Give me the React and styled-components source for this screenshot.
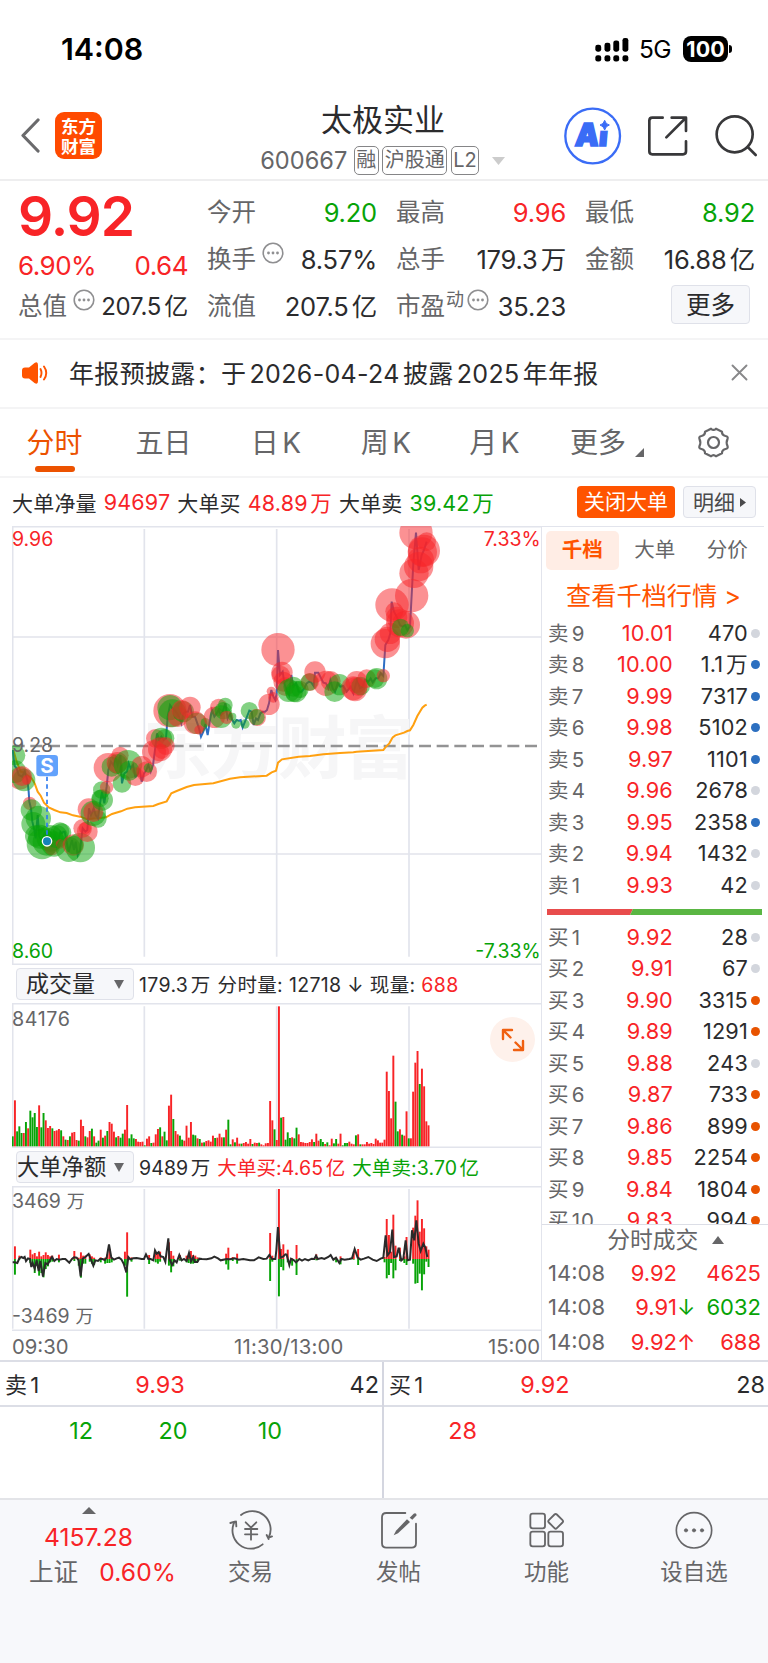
import React from "react";
import styled, { createGlobalStyle } from "styled-components";

const RED = "#f82427";
const GREEN = "#07a307";
const ORANGE = "#ff5400";
const INK = "#2b2b2d";
const GREY = "#666668";
const LINE = "#e2e4ec";

const GlobalStyle = createGlobalStyle`
  * { box-sizing: border-box; }
  body {
    margin: 0;
    background: #fff;
    color: ${INK};
    font-family: Inter, "Noto Sans CJK SC", sans-serif;
    text-autospace: normal;
    white-space: nowrap;
  }
`;

const tones = { red: RED, green: GREEN, grey: GREY, ink: INK };

const Screen = styled.div`
  width: 768px;
  height: 1663px;
  display: flex;
  flex-direction: column;
  overflow: hidden;
`;

const StatusBar = styled.div`
  height: 92px;
  display: flex;
  align-items: center;
  justify-content: space-between;
  padding: 6px 36px 0 61px;
`;

const Clock = styled.div`
  font-size: 30.4px;
  font-weight: 600;
  color: #000;
`;

const StatusRight = styled.div`
  display: flex;
  align-items: center;
  font-size: 25px;
  color: #000;
`;

const Network = styled.span`
  margin: 0 12px 0 10px;
  font-size: 24.5px;
  letter-spacing: -0.6px;
`;

const Battery = styled.div`
  width: 45px;
  height: 26px;
  border-radius: 8px;
  background: #000;
  color: #fff;
  font-size: 21.5px;
  font-weight: 700;
  line-height: 26px;
  text-align: center;
`;

const BatteryTip = styled.div`
  width: 3px;
  height: 8px;
  margin-left: 1px;
  border-radius: 0 4px 4px 0;
  background: #000;
`;

const Header = styled.header`
  height: 89px;
  display: grid;
  grid-template-columns: 248px 1fr 250px;
  border-bottom: 2px solid #eeeeef;
`;

const HeaderLeft = styled.div`
  display: flex;
  align-items: center;
  gap: 15px;
  padding-left: 20px;
`;

const Brand = styled.div`
  width: 47px;
  height: 47px;
  border-radius: 9px;
  background: #ff4a00;
  color: #fff;
  font-size: 17.5px;
  font-weight: 600;
  line-height: 19.5px;
  padding-top: 5px;
  text-align: center;
`;

const HeaderTitle = styled.div`
  display: flex;
  flex-direction: column;
  align-items: center;
`;

const StockName = styled.div`
  margin-top: 8.5px;
  font-size: 31px;
  line-height: 38px;
`;

const StockMeta = styled.div`
  display: flex;
  align-items: center;
  gap: 3.5px;
  margin-top: 7.5px;
  color: ${GREY};
`;

const Code = styled.span`
  margin: 0 3px 0 -1px;
  font-size: 23.6px;
`;

const Tag = styled.span`
  height: 29px;
  padding: 0 1.5px;
  border: 1.5px solid #858587;
  border-radius: 5px;
  font-size: 20px;
  line-height: 26px;
`;

const HeaderRight = styled.div`
  display: flex;
  align-items: center;
  justify-content: flex-end;
`;

const Summary = styled.section`
  height: 159px;
  display: flex;
  gap: 20px;
  padding: 8px 13px 0 18px;
  border-bottom: 2px solid #f4f4f5;
`;

const PriceColumn = styled.div`
  width: 170px;
  flex: none;
`;

const BigPrice = styled.div`
  height: 54px;
  font-size: 55px;
  font-weight: 600;
  line-height: 54px;
  letter-spacing: -1px;
  color: ${RED};
`;

const Change = styled.div`
  height: 36px;
  display: flex;
  align-items: center;
  justify-content: space-between;
  margin-top: 4px;
  font-size: 26px;
  letter-spacing: -0.5px;
  color: ${RED};
`;

const StatGrid = styled.div`
  flex: 1;
  display: grid;
  grid-template-columns: repeat(3, 170px);
  grid-template-rows: repeat(3, 47px);
  column-gap: 19px;
  margin-left: -1px;
`;

const Stat = styled.div`
  height: 47px;
  display: flex;
  align-items: center;
  font-size: 24.5px;
  line-height: 47px;
  color: ${GREY};
`;

const StatValue = styled.span`
  margin-left: auto;
  font-size: ${(p) => (p.$compact ? 24 : 25.5)}px;
  letter-spacing: -0.2px;
  color: ${(p) => tones[p.$tone || "ink"]};
`;

const Hint = styled.sup`
  font-size: 18px;
  line-height: 1;
  margin: 0 -3px 14px 1px;
`;

const InfoIcon = styled.svg`
  flex: none;
  width: 22px;
  height: 22px;
  margin: -13px 0 0 6px;
`;

const MoreButton = styled.button`
  width: 79px;
  height: 39px;
  margin: 2px 5px 0 auto;
  padding: 0;
  border: 1.5px solid #dfe1e9;
  border-radius: 4px;
  background: #f6f7fa;
  color: ${INK};
  font: inherit;
  font-size: 24.5px;
  line-height: 34px;
`;

const Notice = styled.section`
  height: 69px;
  display: flex;
  align-items: center;
  padding: 0 20px 2px 22px;
  border-bottom: 2px solid #f4f4f5;
  font-size: 25px;
`;

const NoticeText = styled.span`
  flex: 1;
  margin: -2px 0 0 21px;
  letter-spacing: 0.34px;
`;

const Tabs = styled.nav`
  height: 69px;
  display: grid;
  grid-template-columns: 109px 109px 116px 104px 113px 1fr 96px;
  border-bottom: 2px solid #f4f4f5;
`;

const Tab = styled.div`
  display: flex;
  flex-direction: column;
  align-items: center;
  font-size: 28px;
  line-height: 68px;
  color: ${(p) => (p.$active ? "#ec5200" : GREY)};

  &::after {
    content: "";
    display: ${(p) => (p.$active ? "block" : "none")};
    width: 40px;
    height: 6px;
    margin-top: -11px;
    border-radius: 3px;
    background: #ec5200;
  }
`;

const MoreTab = styled.div`
  display: flex;
  align-items: center;
  gap: 9px;
  padding-left: 19px;
  font-size: 28px;
  line-height: 68px;
  color: ${GREY};

  svg { margin-top: 19px; }
`;

const GearCell = styled.div`
  display: flex;
  align-items: center;
  justify-content: center;
  padding: 0 14px 2px 0;
`;

const OrderBar = styled.section`
  height: 48px;
  display: flex;
  align-items: center;
  gap: 7px;
  padding: 0 12px 1px 12px;
  font-size: 21px;
  letter-spacing: 0.2px;
`;

const Figure = styled.span`
  color: ${(p) => tones[p.$tone || "ink"]};
`;

const OrderFigure = styled(Figure)`
  font-size: 21.5px;
  letter-spacing: 0.15px;
`;

const CloseOrders = styled.button`
  width: 98px;
  height: 32px;
  margin: 1px 0 0 auto;
  padding: 0;
  border: 0;
  border-radius: 4px;
  background: ${ORANGE};
  color: #fff;
  font: inherit;
  font-size: 21px;
  line-height: 30px;
`;

const DetailButton = styled.button`
  width: 73px;
  height: 32px;
  display: flex;
  align-items: center;
  justify-content: center;
  gap: 5px;
  margin: 1px 0 0 1px;
  padding: 0;
  border: 1.5px solid #dfe1e9;
  border-radius: 4px;
  background: #f6f7fa;
  color: #4a4a4c;
  font: inherit;
  font-size: 21px;
  line-height: 29px;
`;

const Market = styled.main`
  height: 834px;
  display: flex;
`;

const Charts = styled.div`
  width: 542px;
  flex: none;
  padding-left: 12px;
  border-right: 1.5px solid ${LINE};
`;

const Plot = styled.svg`
  display: block;
  width: 530px;
  height: ${(p) => p.$height}px;
`;

const Indicator = styled.div`
  height: 38px;
  display: flex;
  align-items: center;
  gap: 7px;
  padding: 0 0 1px 4px;
  font-size: 19.5px;
  letter-spacing: ${(p) => p.$spacing || 0.1}px;
`;

const Select = styled.div`
  width: 118px;
  height: 32px;
  display: flex;
  align-items: center;
  justify-content: space-between;
  padding: 0 9px 0 ${(p) => p.$inset}px;
  margin: 1px -2px 0 0;
  border: 1.5px solid #dfe1e9;
  border-radius: 4px;
  background: #f6f7fa;
  font-size: ${(p) => (p.$inset ? 23 : 22.3)}px;
  line-height: 28px;
  letter-spacing: 0;
`;

const VolumeWrap = styled.div`
  position: relative;
  height: 145px;
`;

const Expand = styled.div`
  position: absolute;
  top: 14px;
  right: 6px;
  width: 45px;
  height: 45px;
  border-radius: 50%;
  background: #fef1eb;
  display: flex;
  align-items: center;
  justify-content: center;
`;

const TimeAxis = styled.div`
  height: 29px;
  display: flex;
  align-items: center;
  justify-content: space-between;
  padding: 2px 1px 0 0;
  font-size: 20.3px;
  color: ${GREY};
`;

const MidTime = styled.span`
  margin-left: 21px;
  letter-spacing: 0.2px;
`;

const Depth = styled.aside`
  flex: 1;
  display: flex;
  flex-direction: column;
`;

const DepthTabs = styled.div`
  height: 48px;
  display: flex;
  align-items: center;
  padding-left: 4px;
  border-top: 1.5px solid ${LINE};
  margin-right: 13px;
`;

const DepthTab = styled.div`
  width: 72.5px;
  height: 39px;
  flex: none;
  border-radius: 5px;
  background: ${(p) => (p.$active ? "#ffede5" : "none")};
  color: ${(p) => (p.$active ? ORANGE : GREY)};
  font-size: 20.5px;
  font-weight: ${(p) => (p.$active ? 700 : 400)};
  line-height: 38px;
  text-align: center;
`;

const DepthLink = styled.div`
  height: 43.5px;
  padding-left: 24px;
  font-size: 25.2px;
  line-height: 44px;
  color: ${ORANGE};
`;

const Levels = styled.div`
  height: ${(p) => p.$height}px;
  overflow: hidden;
`;

const LevelRow = styled.div`
  height: 31.5px;
  display: grid;
  grid-template-columns: 46px 79px 75px 8px;
  align-items: center;
  padding-left: 6px;
  font-size: 21.7px;
  line-height: 31.5px;
`;

const LevelName = styled.span`
  font-size: 20.5px;
  color: ${GREY};
  letter-spacing: 0.8px;
`;

const LevelPrice = styled.span`
  color: ${RED};
  text-align: right;
  letter-spacing: 0.2px;
`;

const LevelSize = styled.span`
  text-align: right;
  letter-spacing: 0.2px;
`;

const Dot = styled.i`
  width: 9px;
  height: 9px;
  margin-left: 3px;
  border-radius: 50%;
  background: ${(p) => p.$color};
`;

const Ratio = styled.svg`
  display: block;
  flex: none;
  width: 215px;
  height: 6px;
  margin: 8px 0 6.5px 5px;
`;

const TradesTitle = styled.div`
  height: 32px;
  display: flex;
  align-items: center;
  justify-content: center;
  gap: 14px;
  padding-right: 13px;
  margin-right: -26px;
  border-top: 1.5px solid #dcdee6;
  font-size: 22.8px;
  line-height: 30px;
  color: ${GREY};
`;

const TradeRow = styled.div`
  height: 34.5px;
  display: grid;
  grid-template-columns: 73px 56px 16px 68px;
  align-items: center;
  padding-left: 6px;
  font-size: 22px;
  color: ${GREY};
`;

const TradeCell = styled.span`
  text-align: right;
  color: ${(p) => tones[p.$tone]};
`;

const Quotes = styled.section`
  height: 138px;
  display: grid;
  grid-template-columns: 384px 384px;
  border-top: 2px solid #dcdee6;
`;

const QuoteSide = styled.div`
  border-right: ${(p) => (p.$divided ? "2px solid #d4d6e0" : "none")};
  font-size: 23.4px;
`;

const QuoteRow = styled.div`
  height: 45px;
  display: grid;
  grid-template-columns: 83px 1fr 145px;
  align-items: center;
  padding: 1px 5px 0;
  border-bottom: 2px solid #dcdee6;
`;

const QuoteName = styled.span`
  margin-top: -2px;
  font-size: 22px;
  letter-spacing: 0.4px;
`;

const QuotePrice = styled.span`
  text-align: center;
  color: ${RED};
`;

const QuoteSize = styled.span`
  text-align: right;
  margin-right: -2px;
`;

const Queue = styled.div`
  display: grid;
  grid-template-columns: 93px repeat(3, 94.5px);
  padding-top: 9px;
  text-align: right;
  color: ${(p) => tones[p.$tone]};
`;

const BottomBar = styled.footer`
  flex: 1;
  display: grid;
  grid-template-columns: 177px 147px 149px 147px 1fr;
  border-top: 2px solid #e3e4e8;
  background: #f7f8fb;
`;

const IndexBox = styled.div`
  display: flex;
  flex-direction: column;
  align-items: center;
  padding-top: 7px;
  font-size: 24.6px;
  color: ${RED};
`;

const IndexValue = styled.div`
  margin-top: 5px;
  line-height: 36px;
  letter-spacing: 0.1px;
`;

const IndexLine = styled.div`
  display: flex;
  gap: 21px;
  padding-left: 28px;
  line-height: 34px;
  letter-spacing: 0.1px;
`;

const NavItem = styled.div`
  display: flex;
  flex-direction: column;
  align-items: center;
  padding-top: 10px;
  font-size: 22.5px;
  line-height: 36px;
  color: ${GREY};

  svg { margin-bottom: 4px; }
`;

const Icon = ({ w, h, box, color = GREY, width = 4, children }) => (
  <svg
    width={w}
    height={h}
    viewBox={box}
    fill="none"
    stroke={color}
    strokeWidth={width}
    strokeLinecap="round"
    strokeLinejoin="round"
  >
    {children}
  </svg>
);

const Info = () => (
  <InfoIcon viewBox="0 0 22 22">
    <circle cx="11" cy="11" r="9.8" fill="none" stroke="#8f8f91" strokeWidth="1.6" />
    <g fill="#8f8f91">
      <circle cx="6.5" cy="11" r="1.4" />
      <circle cx="11" cy="11" r="1.4" />
      <circle cx="15.5" cy="11" r="1.4" />
    </g>
  </InfoIcon>
);

const Caret = ({ up, w = 13, h = 8, color = GREY }) => (
  <svg width={w} height={h} viewBox="0 0 12 8" preserveAspectRatio="none">
    <path d={up ? "M0 8 6 0 12 8Z" : "M0 0H12L6 8Z"} fill={color} />
  </svg>
);

// Chart space: 6.6 units per minute, three units per css pixel.
const minuteX = (i) => 38.2 + i * 6.6;

const volumes = `g30 r138 g45 g60 g40 r40 g73 r54 g107 g87 g100 g58 r123 g57 g100 r78 r55 r61 g54 r46
r48 r52 g48 r30 g20 r19 g30 r41 r43 r19 g17 r80 r61 g30 r27 r46 g53 r30 g11 g17
r50 g26 r32 g46 r73 r68 r44 g27 r31 g26 g38 r50 r124 g24 g36 g24 r22 r14 r13 r14
g3 r23 r30 g10 r11 r36 r52 g57 r30 g44 g18 r122 r155 g82 r46 r36 g32 g20 r17 r62
r26 r73 g35 g33 r24 g22 r11 g12 r16 r18 r14 r32 g25 r26 r38 r27 g27 r50 g80 g6
r21 g12 r26 r8 g8 r10 r13 r8 r22 g7 r11 r10 g11 r6 r3 r9 r10 r136 r78 g51
r19 r420 g86 r88 g20 g42 g25 r27 g24 g56 r36 r13 r12 r10 r10 r13 r21 g13 r38 r17
g22 g13 r7 g12 r3 r23 g9 g22 r8 r38 g3 g10 g10 r14 r8 r6 g33 r36 g6 r6
r6 r13 r8 r10 r7 r23 r18 r11 r11 r20 r224 r166 r84 r272 g134 g45 r51 g35 r32 r105
g24 r24 r164 r251 r286 g187 r233 r180 r75 r63`
  .split(/\s+/)
  .map((v) => ({ color: v[0] === "r" ? RED : GREEN, h: Number(v.slice(1)) }));

// [minute, buy, sell]
const flows = [
  [1, 38, 47], [3, 10, 3], [8, 28, 12], [9, 14, 20], [10, 18, 42], [11, 8, 20], [12, 22, 50], [13, 8, 42],
  [14, 12, 55], [15, 20, 30], [16, 12, 22], [17, 8, 10], [18, 10, 8], [21, 13, 10], [28, 24, 6], [30, 4, 20],
  [31, 20, 56], [32, 10, 14], [33, 10, 14], [35, 14, 8], [36, 8, 14], [37, 4, 18], [40, 5, 10], [42, 4, 14],
  [43, 14, 12], [44, 30, 12], [45, 4, 10], [51, 22, 20], [52, 80, 113], [54, 5, 8], [62, 12, 15], [65, 20, 10],
  [66, 20, 14], [67, 22, 8], [71, 50, 20], [72, 24, 40], [73, 10, 22], [76, 12, 5], [79, 10, 10], [80, 12, 12],
  [81, 24, 14], [82, 12, 14], [83, 10, 12], [84, 5, 8], [97, 16, 16], [98, 34, 32], [100, 6, 6], [102, 16, 14],
  [117, 78, 66], [118, 10, 8], [121, 210, 112], [122, 30, 24], [123, 44, 34], [125, 28, 10], [127, 2, 20],
  [129, 42, 48], [138, 14, 4], [147, 2, 10], [149, 8, 16], [155, 22, 2], [157, 30, 18], [169, 6, 10],
  [170, 120, 58], [171, 72, 48], [172, 22, 12], [173, 133, 58], [174, 40, 34], [176, 34, 6], [178, 8, 12],
  [179, 66, 18], [182, 94, 14], [183, 130, 74], [184, 176, 72], [185, 82, 44], [186, 120, 94], [187, 92, 46],
  [188, 38, 8], [189, 28, 24],
];

const pricePath =
  "38 690 44 738 50 745 56 765 66 770 74 755 82 780 86 815 88 845 93 865 97 905 103 930 107 955 113 885 118 950 126 960 134 940 141 965 150 955 156 975 165 945 175 965 181 935 186 940 190 935 194 935 200 965 206 995 216 960 222 990 227 965 233 1005 240 990 248 925 256 935 262 930 267 865 273 885 281 865 287 885 294 895 300 850 306 815 313 850 320 800 325 750 333 725 340 735 347 715 353 735 361 705 366 790 373 760 381 755 386 730 392 745 399 735 406 770 412 765 419 750 425 785 432 760 439 750 445 735 452 755 459 735 465 690 471 640 478 660 484 650 491 660 498 655 503 590 510 555 517 565 524 570 531 580 537 590 544 610 550 580 557 575 564 575 570 555 577 590 585 590 592 610 597 625 603 650 610 635 616 612 623 645 630 600 636 570 643 590 650 580 656 570 663 585 670 570 676 550 683 595 690 580 697 600 703 610 710 600 716 602 722 600 728 622 735 605 741 590 748 572 755 575 761 615 768 595 774 600 781 580 788 575 795 575 801 570 807 550 814 510 820 530 826 540 830 520 834 390 840 465 848 455 853 490 860 510 867 525 874 465 880 500 888 490 896 515 905 515 913 505 920 490 927 485 934 488 941 498 945 458 955 458 962 472 970 488 978 490 985 505 991 480 998 505 1005 515 1013 490 1021 500 1030 498 1040 515 1052 500 1060 520 1071 480 1080 505 1088 500 1095 480 1105 485 1112 475 1118 487 1127 475 1135 475 1142 460 1150 468 1156 375 1165 360 1171 340 1175 245 1182 275 1190 290 1200 315 1208 320 1215 315 1222 330 1230 320 1240 130 1248 38 1256 150 1265 105 1272 90 1280 65";

const averagePath =
  "40 690 50 725 62 755 72 757 82 765 95 775 104 790 113 815 122 827 132 848 146 862 163 870 181 877 200 879 219 886 240 890 260 897 294 895 318 892 336 882 363 874 382 866 405 862 460 858 475 852 500 844 514 820 530 813 560 801 582 795 640 790 690 776 720 772 800 767 815 757 828 752 834 728 846 718 896 710 930 708 970 703 1020 699 1060 697 1070 695 1150 690 1156 682 1168 670 1178 652 1186 646 1212 638 1222 633 1230 631 1240 615 1252 588 1267 563 1274 557 1280 554";

const bubbles = `g46,706,30 r60,775,34 g45,755,34 g72,780,34 r66,768,30 r80,780,14 r89,850,20 g94,870,32 g100,912,36
g115,895,38 g107,948,32 g120,950,36 g126,972,46 g140,965,42 g150,955,40 r156,982,24 g162,972,38 g180,935,28
g186,938,28 g170,950,34 r181,972,14 g206,988,38 r220,975,32 g222,975,28 g241,983,44 r248,925,28 r262,935,31
r255,925,18 r266,868,33 g280,880,38 g294,897,26 r280,876,30 g307,840,32 g305,810,26 r320,802,20 g300,835,26
r325,743,44 r360,706,26 g335,740,30 g352,732,30 r352,728,32 g384,733,43 g366,790,28 r406,770,28 r425,740,32
g388,752,30 r440,755,31 g445,744,14 r466,655,28 g484,655,32 g495,655,28 r462,696,36 r480,688,36 r497,678,27
r485,695,22 r510,572,50 g510,563,38 g517,580,42 r534,590,31 g550,575,32 r570,562,32 r545,570,30 g590,610,32
r585,608,34 r597,630,14 g616,608,14 r643,592,32 r656,562,26 g663,590,34 g676,555,22 g670,572,26 r680,592,20
g697,590,12 g708,612,14 g735,612,14 g748,572,26 r772,592,26 g770,592,24 r807,553,32 r814,514,14 r820,532,16
r834,389,50 r846,457,32 r842,465,28 r850,485,30 r856,500,28 g866,512,34 g880,500,30 g888,515,32 g882,520,26
g900,508,26 r930,486,27 g928,486,26 r945,456,32 r978,490,38 r992,483,30 g1004,515,31 g1018,494,32 r1060,505,36
r1070,486,33 r1065,508,36 g1082,498,28 r1075,500,28 r1100,476,28 g1125,476,28 g1130,476,32 r1150,467,20
r1156,371,44 r1162,358,38 r1171,340,32 r1176,255,50 r1183,274,27 r1190,292,32 r1200,310,42 r1218,314,42
g1202,322,26 g1222,332,20 r1235,227,50 r1242,160,44 r1256,140,44 r1262,120,40 r1248,38,50 r1272,92,48
r1267,96,44 r1280,65,28`
  .split(/\s+/)
  .map((b) => {
    const [x, y, r] = b.slice(1).split(",");
    return { color: b[0] === "r" ? RED : GREEN, x, y, r };
  });

const netPath =
  "38 936 44 936 52 938 58 924 64 920 70 923 74 920 78 932 84 924 90 926 94 950 98 938 104 955 110 930 116 962 121 932 129 979 136 938 143 942 150 930 156 920 163 932 170 926 178 928 188 926 196 926 208 937 216 926 222 921 230 922 236 930 242 978 248 925 256 920 266 911 272 926 280 946 286 930 294 932 300 926 308 926 314 929 320 922 327 882 334 922 342 928 350 924 357 922 364 927 371 940 379 966 385 920 391 927 400 924 410 923 425 926 432 926 438 912 445 926 452 926 460 930 465 900 470 910 476 905 482 918 490 920 496 934 505 864 508 925 516 944 524 930 530 936 538 914 545 930 552 926 560 932 567 908 573 933 580 920 584 935 592 935 598 925 606 926 620 927 634 924 643 919 654 924 662 930 680 926 690 927 704 924 716 928 730 926 750 930 762 930 776 921 790 926 800 925 808 914 816 926 826 926 829 900 834 830 841 922 850 918 856 912 860 913 868 944 873 925 882 930 888 936 898 926 906 931 915 926 925 930 935 925 943 926 948 916 953 926 965 923 973 926 985 920 992 914 1000 928 1008 922 1018 938 1024 926 1034 928 1048 926 1056 924 1064 896 1073 922 1082 928 1092 925 1105 920 1118 928 1130 932 1142 925 1150 922 1157 855 1162 915 1170 905 1177 838 1182 920 1190 918 1196 892 1204 930 1210 925 1217 870 1223 930 1230 928 1236 840 1243 870 1249 810 1256 880 1262 902 1270 880 1276 892 1282 920";

const asks = [
  ["卖9", "10.01", "470", 0], ["卖8", "10.00", "1.1万", 1], ["卖7", "9.99", "7317", 1],
  ["卖6", "9.98", "5102", 1], ["卖5", "9.97", "1101", 1], ["卖4", "9.96", "2678", 0],
  ["卖3", "9.95", "2358", 1], ["卖2", "9.94", "1432", 0], ["卖1", "9.93", "42", 0],
];

const bids = [
  ["买1", "9.92", "28", 0], ["买2", "9.91", "67", 0], ["买3", "9.90", "3315", 1],
  ["买4", "9.89", "1291", 1], ["买5", "9.88", "243", 0], ["买6", "9.87", "733", 1],
  ["买7", "9.86", "899", 1], ["买8", "9.85", "2254", 1], ["买9", "9.84", "1804", 1],
  ["买10", "9.83", "994", 1],
];

const Level = ({ row, accent }) => (
  <LevelRow>
    <LevelName>{row[0]}</LevelName>
    <LevelPrice>{row[1]}</LevelPrice>
    <LevelSize>{row[2]}</LevelSize>
    <Dot $color={row[3] ? accent : "#d3d6dd"} />
  </LevelRow>
);

const PriceChart = () => (
  <Plot $height={439} viewBox="36 18 1590 1317" fontSize="58.5">
    <g stroke={LINE} strokeWidth="5">
      <path d="M36 20H1626M36 351H1626M36 1002H1626M36 1333H1626" />
      <path d="M38 18V1335M433 27V1310M830 27V1310M1227 27V1310" />
    </g>
    <text x="430" y="758" fontSize="206" fontWeight="700" fill="#f6f6f7" textLength="812">
      东方财富
    </text>
    <path d="M38 678H1620" stroke="#939394" strokeWidth="7" strokeDasharray="36 17" />
    <polyline points={averagePath} fill="none" stroke="#ffa010" strokeWidth="6" />
    <polyline points={pricePath} fill="none" stroke="#2d6fc4" strokeWidth="6" />
    {bubbles.map((b, i) => (
      <circle key={i} cx={b.x} cy={b.y} r={b.r} fill={b.color} opacity="0.5" />
    ))}
    <path d="M141 770V950" stroke="#2d7bf0" strokeWidth="5" strokeDasharray="13 10" />
    <rect x="109" y="705" width="65" height="64" rx="10" fill="#62a2fc" />
    <text x="141" y="759" fontSize="62" fontWeight="700" fill="#fff" textAnchor="middle">
      S
    </text>
    <circle cx="141" cy="964" r="14" fill="#1583b9" stroke="#fff" strokeWidth="4" />
    <text x="36" y="77" fill={RED}>9.96</text>
    <text x="1622" y="77" fill={RED} textAnchor="end">7.33%</text>
    <text x="36" y="695" fill={GREY}>9.28</text>
    <text x="36" y="1313" fill={GREEN}>8.60</text>
    <text x="1622" y="1313" fill={GREEN} textAnchor="end">-7.33%</text>
  </Plot>
);

const VolumeChart = () => (
  <Plot $height={145} viewBox="36 158 1590 435" fontSize="59">
    <g stroke={LINE} strokeWidth="5">
      <path d="M36 160H1626M36 591H1626M38 158V593M433 168V588M830 168V588M1227 168V588" />
    </g>
    {volumes.map((v, i) => (
      <rect key={i} x={minuteX(i) - 2.9} y={588 - v.h} width="5.8" height={v.h} fill={v.color} />
    ))}
    <text x="36" y="226" fill={GREY} textLength="174">84176</text>
  </Plot>
);

const NetChart = () => (
  <Plot $height={145} viewBox="36 707 1590 435" fontSize="58.5">
    <g stroke={LINE} strokeWidth="5">
      <path d="M36 709H1626M36 1140H1626M38 707V1135M433 716V1135M830 716V1135M1227 716V1135" />
    </g>
    {flows.map(([i, buy, sell]) => (
      <g key={i}>
        <rect x={minuteX(i) - 2.9} y={926 - buy} width="5.8" height={buy} fill={RED} />
        <rect x={minuteX(i) - 2.9} y="926" width="5.8" height={sell} fill={GREEN} />
      </g>
    ))}
    <polyline points={netPath} fill="none" stroke="#2a2a2a" strokeWidth="6" />
    <text x="36" y="774" fill={GREY}>3469<tspan dx="-4" fontSize="54">万</tspan></text>
    <text x="36" y="1117" fill={GREY}>-3469<tspan dx="-4" fontSize="54">万</tspan></text>
  </Plot>
);

const App = () => (
  <Screen>
    <GlobalStyle />
    <StatusBar>
      <Clock>14:08</Clock>
      <StatusRight>
        <svg width="34" height="25" viewBox="119 19 104 75">
          {[[120, 42, 21], [148, 36, 27], [175, 29, 34], [203, 21, 42]].map(([x, y, h]) => (
            <g key={x}>
              <rect x={x} y={y} width="18" height={h} rx="7" />
              <rect x={x} y="74" width="18" height="19" rx="7" />
            </g>
          ))}
        </svg>
        <Network>5G</Network>
        <Battery>100</Battery>
        <BatteryTip />
      </StatusRight>
    </StatusBar>

    <Header>
      <HeaderLeft>
        <Icon w={20} h={35} box="0 0 20 35" color="#6a6a6c" width={3.2}>
          <path d="M18 2 3 17.5 18 33" />
        </Icon>
        <Brand>东方<br />财富</Brand>
      </HeaderLeft>
      <HeaderTitle>
        <StockName>太极实业</StockName>
        <StockMeta>
          <Code>600667</Code>
          <Tag>融</Tag>
          <Tag>沪股通</Tag>
          <Tag>L2</Tag>
          <svg width="22" height="8" viewBox="0 0 22 8">
            <path d="M9 0H22L15.5 8Z" fill="#ccc" />
          </svg>
        </StockMeta>
      </HeaderTitle>
      <HeaderRight>
        <svg width="204" height="60" viewBox="27 228 612 180" fill="none">
          <circle cx="113" cy="318" r="82" stroke="#3a6cf6" strokeWidth="7" />
          <text
            x="60"
            y="348"
            fontSize="94"
            fontWeight="900"
            fill="#3a6cf6"
            stroke="#3a6cf6"
            strokeWidth="5"
            textLength="98"
            lengthAdjust="spacingAndGlyphs"
            transform="skewX(-5) translate(29 0)"
          >
            Ai
          </text>
          <path d="M130 264H172V302H130Z" fill="#fff" />
          <path
            d="M149 271Q152 283 163 285Q152 288 149 300Q146 288 135 285Q146 283 149 271Z"
            fill="#3a6cf6"
            stroke="#3a6cf6"
            strokeWidth="3"
          />
          <g stroke="#38383a" strokeWidth="8" strokeLinecap="round" strokeLinejoin="round">
            <path d="M323 263H292Q283 263 283 272V364Q283 373 292 373H384Q393 373 393 364V334" />
            <path d="M350 263H393V303M392 264 334 322" />
            <circle cx="539" cy="313" r="54" />
            <path d="M578 351 602 375" />
          </g>
        </svg>
      </HeaderRight>
    </Header>

    <Summary>
      <PriceColumn>
        <BigPrice>9.92</BigPrice>
        <Change><span>6.90%</span><span>0.64</span></Change>
        <Stat>总值<Info /><StatValue $compact>207.5亿</StatValue></Stat>
      </PriceColumn>
      <StatGrid>
        <Stat>今开<StatValue $tone="green">9.20</StatValue></Stat>
        <Stat>最高<StatValue $tone="red">9.96</StatValue></Stat>
        <Stat>最低<StatValue $tone="green">8.92</StatValue></Stat>
        <Stat>换手<Info /><StatValue>8.57%</StatValue></Stat>
        <Stat>总手<StatValue>179.3万</StatValue></Stat>
        <Stat>金额<StatValue>16.88亿</StatValue></Stat>
        <Stat>流值<StatValue>207.5亿</StatValue></Stat>
        <Stat>市盈<Hint>动</Hint><Info /><StatValue>35.23</StatValue></Stat>
        <MoreButton>更多</MoreButton>
      </StatGrid>
    </Summary>

    <Notice>
      <svg width="26" height="22" viewBox="0 0 26 22">
        <path d="M3 5.500H7L12.500 1Q16 -1 16 3V19Q16 23 12.500 21L7 16.500H3Q0 16.500 0 13.500V8.500Q0 5.500 3 5.500Z" fill={ORANGE} />
        <path d="M18.500 7Q20.500 11 18.500 15M22 4.500Q26.500 11 22 17.500" fill="none" stroke={ORANGE} strokeWidth="1.9" strokeLinecap="round" />
      </svg>
      <NoticeText>年报预披露：于2026-04-24披露2025年年报</NoticeText>
      <Icon w={17} h={17} box="0 0 17 17" color="#88888a" width={1.9}>
        <path d="M1.500 1.500 15.500 15.500M15.500 1.500 1.500 15.500" />
      </Icon>
    </Notice>

    <Tabs>
      <Tab $active>分时</Tab>
      <Tab>五日</Tab>
      <Tab>日K</Tab>
      <Tab>周K</Tab>
      <Tab>月K</Tab>
      <MoreTab>
        更多
        <svg width="9" height="9" viewBox="0 0 9 9"><path d="M9 0V9H0Z" fill={GREY} /></svg>
      </MoreTab>
      <GearCell>
        <Icon w={33} h={33} box="0 0 33 33" width={2.2}>
          <path d="M11.500 4 14 2.700Q16.500 5.200 19 2.700L25 5.700Q24.800 9 28.500 10Q31.500 10.500 30.500 13Q28.800 16.500 30.500 20Q31.500 22.500 28.500 23Q24.800 24 25 27.300L19 30.300Q16.500 27.800 14 30.300L8 27.300Q8.200 24 4.500 23Q1.500 22.500 2.500 20Q4.200 16.500 2.500 13Q1.500 10.500 4.500 10Q8.200 9 8 5.700Z" />
          <circle cx="16.500" cy="16.500" r="5.500" />
        </Icon>
      </GearCell>
    </Tabs>

    <OrderBar>
      <span>大单净量</span>
      <OrderFigure $tone="red">94697</OrderFigure>
      <span>大单买</span>
      <OrderFigure $tone="red">48.89万</OrderFigure>
      <span>大单卖</span>
      <OrderFigure $tone="green">39.42万</OrderFigure>
      <CloseOrders>关闭大单</CloseOrders>
      <DetailButton>
        明细
        <svg width="6" height="9" viewBox="0 0 6 9"><path d="M0 0 6 4.500 0 9Z" fill="#4a4a4c" /></svg>
      </DetailButton>
    </OrderBar>

    <Market>
      <Charts>
        <PriceChart />
        <Indicator $spacing={0.35}>
          <Select $inset={9}>成交量<Caret w={10} h={9} /></Select>
          <span>179.3万</span>
          <span>分时量: 12718 ↓ 现量: <Figure $tone="red">688</Figure></span>
        </Indicator>
        <VolumeWrap>
          <VolumeChart />
          <Expand>
            <Icon w={24} h={24} box="0 0 24 24" color="#f06010" width={2.4}>
              <path d="M2 11V2H11M2.500 2.500 9.500 9.500M22 13V22H13M21.500 21.500 14.500 14.500" />
            </Icon>
          </Expand>
        </VolumeWrap>
        <Indicator>
          <Select $inset={0}>大单净额<Caret w={10} h={9} /></Select>
          <span>9489万</span>
          <Figure $tone="red">大单买:4.65亿</Figure>
          <Figure $tone="green">大单卖:3.70亿</Figure>
        </Indicator>
        <NetChart />
        <TimeAxis>
          <span>09:30</span>
          <MidTime>11:30/13:00</MidTime>
          <span>15:00</span>
        </TimeAxis>
      </Charts>

      <Depth>
        <DepthTabs>
          <DepthTab $active>千档</DepthTab>
          <DepthTab>大单</DepthTab>
          <DepthTab>分价</DepthTab>
        </DepthTabs>
        <DepthLink>查看千档行情 &gt;</DepthLink>
        <Levels $height={283.5}>
          {asks.map((row) => <Level key={row[0]} row={row} accent="#2c6fc0" />)}
        </Levels>
        <Ratio viewBox="0 0 215 6">
          <path d="M0 0H86L83 6H0Z" fill="#e84c4c" />
          <path d="M86 0H215V6H83Z" fill="#5ab643" />
        </Ratio>
        <Levels $height={302}>
          {bids.map((row) => <Level key={row[0]} row={row} accent="#e85300" />)}
        </Levels>
        <TradesTitle>分时成交<Caret up w={12} h={8} /></TradesTitle>
        <TradeRow>
          14:08
          <TradeCell $tone="red">9.92</TradeCell>
          <span />
          <TradeCell $tone="red">4625</TradeCell>
        </TradeRow>
        <TradeRow>
          14:08
          <TradeCell $tone="red">9.91</TradeCell>
          <TradeCell $tone="green">↓</TradeCell>
          <TradeCell $tone="green">6032</TradeCell>
        </TradeRow>
        <TradeRow>
          14:08
          <TradeCell $tone="red">9.92</TradeCell>
          <TradeCell $tone="red">↑</TradeCell>
          <TradeCell $tone="red">688</TradeCell>
        </TradeRow>
      </Depth>
    </Market>

    <Quotes>
      <QuoteSide $divided>
        <QuoteRow>
          <QuoteName>卖1</QuoteName>
          <QuotePrice>9.93</QuotePrice>
          <QuoteSize>42</QuoteSize>
        </QuoteRow>
        <Queue $tone="green"><span>12</span><span>20</span><span>10</span></Queue>
      </QuoteSide>
      <QuoteSide>
        <QuoteRow>
          <QuoteName>买1</QuoteName>
          <QuotePrice>9.92</QuotePrice>
          <QuoteSize>28</QuoteSize>
        </QuoteRow>
        <Queue $tone="red"><span>28</span></Queue>
      </QuoteSide>
    </Quotes>

    <BottomBar>
      <IndexBox>
        <Caret up w={14} h={7} />
        <IndexValue>4157.28</IndexValue>
        <IndexLine>
          <Figure $tone="grey">上证</Figure>
          <span>0.60%</span>
        </IndexLine>
      </IndexBox>
      <NavItem>
        <Icon w={44} h={40} box="26 29 132 120" width={5.5}>
          <path d="M62 44A55 55 0 0 1 145 112L155 108M145 116 139 104M127 132A55 55 0 0 1 43 64L30 68M47 63 48 78" />
          <path d="M76 66 92 82 108 66M92 82V118M74 86H111M74 102H111" />
        </Icon>
        交易
      </NavItem>
      <NavItem>
        <Icon w={40} h={40} box="477 29 120 120" width={5.5}>
          <path d="M556 38H499Q486 38 486 51V129Q486 142 499 142H575Q588 142 588 129V70" />
          <path d="M521 105 528 91 561 57 570 65 534 99Z" fill={GREY} stroke="none" />
          <path d="M569 52 581 40Q589 36 590 45L577 58Z" fill={GREY} stroke="none" />
        </Icon>
        发帖
      </NavItem>
      <NavItem>
        <Icon w={40} h={40} box="920 29 120 120" width={5.5}>
          <rect x="930" y="40" width="44" height="44" rx="7" />
          <rect x="930" y="94" width="44" height="44" rx="7" />
          <rect x="984" y="94" width="44" height="44" rx="7" />
          <rect x="989" y="46" width="34" height="34" rx="5" transform="rotate(45 1006 63)" />
        </Icon>
        功能
      </NavItem>
      <NavItem>
        <Icon w={40} h={40} box="1362 29 120 120" width={5}>
          <circle cx="1422" cy="90" r="53" />
          <g fill={GREY} strokeWidth="2">
            <circle cx="1398" cy="90" r="5" />
            <circle cx="1422" cy="90" r="5" />
            <circle cx="1446" cy="90" r="5" />
          </g>
        </Icon>
        设自选
      </NavItem>
    </BottomBar>
  </Screen>
);

export default App;
